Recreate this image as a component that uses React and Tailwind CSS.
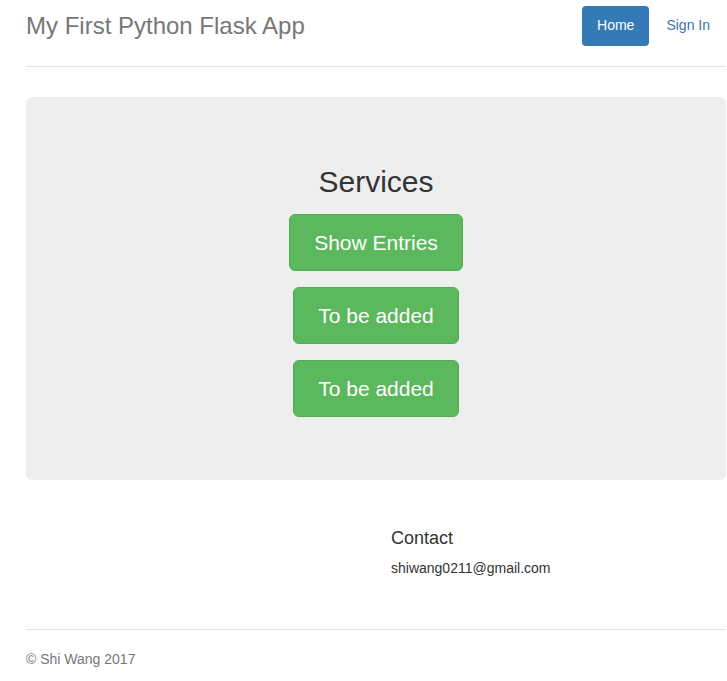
export default function App() {
  const font = { fontFamily: '"Liberation Sans", Arial, sans-serif' };

  return (
    <div style={font} className="min-h-screen bg-white text-[14px] text-[#333] leading-[1.42857]">
      <div className="pl-[26px] w-[726px]">
        {/* Header */}
        <div className="flex items-center justify-between pt-[6px] pb-[20px] border-b border-[#e5e5e5]">
          <h3 className="text-[24px] leading-[40px] text-[#777] m-0">My First Python Flask App</h3>
          <nav className="flex items-center gap-[2px] mr-[1px]">
            <a className="h-[40px] px-[15px] flex items-center rounded-[4px] bg-[#337ab7] text-white">Home</a>
            <a className="h-[40px] px-[15px] flex items-center text-[#3d72b6]">Sign In</a>
          </nav>
        </div>

        {/* Jumbotron */}
        <div className="mt-[30px] bg-[#eee] rounded-[6px] pt-[68px] pb-[63px] flex flex-col items-center">
          <h2 className="text-[30px] leading-[33px] text-[#333] mb-[16px]">Services</h2>
          <div className="flex flex-col items-center gap-[16px]">
            <a className="h-[57px] px-[24px] flex items-center rounded-[6px] bg-[#5cb85c] border border-[#4cae4c] text-white text-[21px]">Show Entries</a>
            <a className="h-[57px] px-[24px] flex items-center rounded-[6px] bg-[#5cb85c] border border-[#4cae4c] text-white text-[21px]">To be added</a>
            <a className="h-[57px] px-[24px] flex items-center rounded-[6px] bg-[#5cb85c] border border-[#4cae4c] text-white text-[21px]">To be added</a>
          </div>
        </div>

        {/* Marketing */}
        <div className="grid grid-cols-2 mt-[48px]">
          <div></div>
          <div className="pl-[15px]">
            <h4 className="text-[18px] leading-[20px] text-[#333]">Contact</h4>
            <p className="mt-[10px] leading-[20px]">shiwang0211@gmail.com</p>
          </div>
        </div>

        {/* Footer */}
        <footer className="mt-[51px] border-t border-[#e5e5e5] pt-[19px] text-[#777]">
          <p className="leading-[20px]">© Shi Wang 2017</p>
        </footer>
      </div>
    </div>
  );
}
